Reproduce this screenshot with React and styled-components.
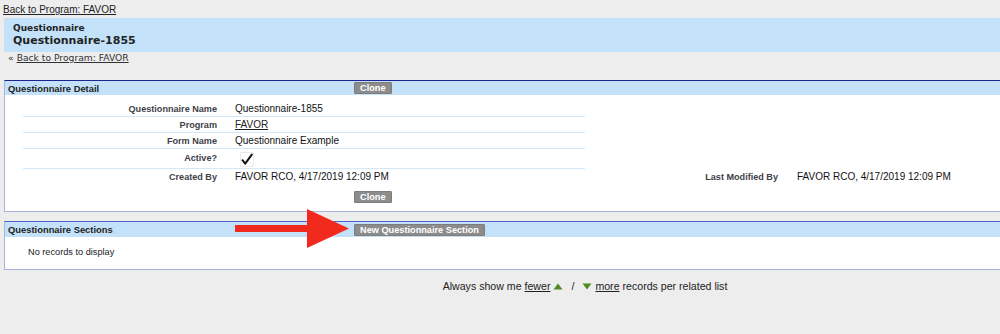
import React from 'react';
import styled, { createGlobalStyle } from 'styled-components';

const GlobalStyle = createGlobalStyle`
  html, body {
    margin: 0;
    padding: 0;
    background: #ededed;
    overflow: hidden;
  }
  body {
    font-family: 'Liberation Sans', Arial, sans-serif;
    color: #222;
  }
`;

const Page = styled.div`
  position: relative;
  width: 1000px;
  min-height: 334px;
`;

const TopLink = styled.a`
  display: block;
  padding: 4px 0 0 3px;
  font-size: 10px;
  line-height: 12px;
  color: #222;
  text-decoration: underline;
`;

const TitleBand = styled.div`
  margin: 2px 0 0 4px;
  padding: 4px 0 4px 9px;
  background: #c3e2fa;
  font-family: 'DejaVu Sans', Verdana, sans-serif;
  font-weight: bold;
  color: #222;

  h1 {
    margin: 0;
    font-size: 9px;
    line-height: 12px;
  }
  h2 {
    margin: 0;
    font-size: 11px;
    line-height: 14px;
  }
`;

const BackLink = styled.div`
  padding-left: 8px;
  font-family: 'DejaVu Sans', Verdana, sans-serif;
  font-size: 9.2px;
  line-height: 12px;
  color: #333;

  a {
    color: #333;
    text-decoration: underline;
    margin-left: 3px;
  }
`;

const Panel = styled.div`
  margin: ${({ $top }) => $top}px 0 0 4px;
  border-top: 1px solid ${({ $accent }) => $accent};
  border-left: 1px solid #a9b3df;
  border-bottom: 1px solid #a9b3df;
  background: #fff;
`;

const PanelHeader = styled.div`
  display: flex;
  align-items: center;
  height: ${({ $h }) => $h}px;
  background: #c3e2fa;
`;

const PanelTitle = styled.h3`
  width: 346px;
  margin: 0;
  padding-left: 3px;
  font-size: 9.4px;
  font-weight: bold;
  color: #222;
`;

const Button = styled.button`
  height: 12px;
  padding: 0 5px;
  border: 1px solid #7d7d7d;
  border-radius: 1px;
  background: #8c8c8c;
  color: #fff;
  font-family: 'Liberation Sans', Arial, sans-serif;
  font-size: 9.2px;
  font-weight: bold;
  line-height: 10px;
  cursor: pointer;
`;

const DetailBody = styled.div`
  padding-top: 6px;
`;

const DetailGrid = styled.div`
  display: grid;
  grid-template-columns: 204px 358px 203px 1fr;
  margin-left: 18px;
`;

const Label = styled.div`
  padding: ${({ $pad }) => $pad || '2px 10px 1px 0'};
  text-align: right;
  font-size: 9.1px;
  font-weight: bold;
  line-height: 12px;
  color: #3e3e48;
  border-bottom: 1px solid ${({ $line }) => ($line ? '#d3e9fb' : 'transparent')};
`;

const Value = styled.div`
  padding: ${({ $pad }) => $pad || '2px 0 1px 8px'};
  font-size: 10px;
  line-height: 12px;
  color: #111;
  border-bottom: 1px solid ${({ $line }) => ($line ? '#d3e9fb' : 'transparent')};

  a {
    color: #222;
    text-decoration: underline;
  }
`;

const ButtonRow = styled.div`
  display: flex;
  padding: 4px 0 8px 349px;
`;

const EmptyText = styled.div`
  padding: 9px 0 11px 23px;
  font-size: 9.2px;
  line-height: 12px;
  color: #222;
`;

const Footer = styled.div`
  display: flex;
  justify-content: center;
  align-items: center;
  gap: 3px;
  margin-top: 9px;
  padding-left: 170px;
  font-size: 10.6px;
  line-height: 14px;
  color: #222;

  a {
    color: #222;
    text-decoration: underline;
  }
`;

const Slash = styled.span`
  margin: 0 5px;
`;

const Arrow = styled.svg`
  position: absolute;
  left: 230px;
  top: 205px;
`;

function CheckImg() {
  return (
    <svg width="14" height="15" viewBox="0 0 14 15" style={{ display: 'block' }}>
      <rect x="0.5" y="0.5" width="13" height="14" fill="none" stroke="#d6d6d6" strokeDasharray="1 1" />
      <path d="M2.5 8.2 L5.2 11.6 L11.8 2.6" fill="none" stroke="#111" strokeWidth="2" strokeLinejoin="round" strokeLinecap="round" />
    </svg>
  );
}

function Tri({ up }) {
  return (
    <svg width="10" height="7" viewBox="0 0 10 7">
      <polygon points={up ? '5,0.5 9.5,6.5 0.5,6.5' : '0.5,0.5 9.5,0.5 5,6.5'} fill="#4f8a23" />
    </svg>
  );
}

export default function App() {
  return (
    <Page>
      <GlobalStyle />
      <TopLink href="#">Back to Program: FAVOR</TopLink>

      <TitleBand>
        <h1>Questionnaire</h1>
        <h2>Questionnaire-1855</h2>
      </TitleBand>

      <BackLink>
        «<a href="#">Back to Program: FAVOR</a>
      </BackLink>

      <Panel $top={16} $accent="#1c248f">
        <PanelHeader $h={14}>
          <PanelTitle>Questionnaire Detail</PanelTitle>
          <Button>Clone</Button>
        </PanelHeader>
        <DetailBody>
          <DetailGrid>
            <Label $line>Questionnaire Name</Label>
            <Value $line>Questionnaire-1855</Value>
            <div />
            <div />

            <Label $line>Program</Label>
            <Value $line>
              <a href="#">FAVOR</a>
            </Value>
            <div />
            <div />

            <Label $line>Form Name</Label>
            <Value $line>Questionnaire Example</Value>
            <div />
            <div />

            <Label $line $pad="3px 10px 4px 0">Active?</Label>
            <Value $line $pad="3px 0 1px 13px">
              <CheckImg />
            </Value>
            <div />
            <div />

            <Label $pad="2px 10px 3px 0">Created By</Label>
            <Value $pad="2px 0 3px 8px">FAVOR RCO, 4/17/2019 12:09 PM</Value>
            <Label $pad="2px 10px 3px 0">Last Modified By</Label>
            <Value $pad="2px 0 3px 9px">FAVOR RCO, 4/17/2019 12:09 PM</Value>
          </DetailGrid>
          <ButtonRow>
            <Button>Clone</Button>
          </ButtonRow>
        </DetailBody>
      </Panel>

      <Panel $top={9} $accent="#5163c7">
        <PanelHeader $h={15}>
          <PanelTitle>Questionnaire Sections</PanelTitle>
          <Button>New Questionnaire Section</Button>
        </PanelHeader>
        <EmptyText>No records to display</EmptyText>
      </Panel>

      <Footer>
        <span>Always show me</span>
        <a href="#">fewer</a>
        <Tri up />
        <Slash>/</Slash>
        <Tri />
        <a href="#">more</a>
        <span>records per related list</span>
      </Footer>

      <Arrow width="125" height="48" viewBox="0 0 125 48">
        <rect x="5" y="20" width="74" height="7" fill="#f22a1e" />
        <polygon points="77,4 119,23.5 77,43" fill="#f22a1e" />
      </Arrow>
    </Page>
  );
}
